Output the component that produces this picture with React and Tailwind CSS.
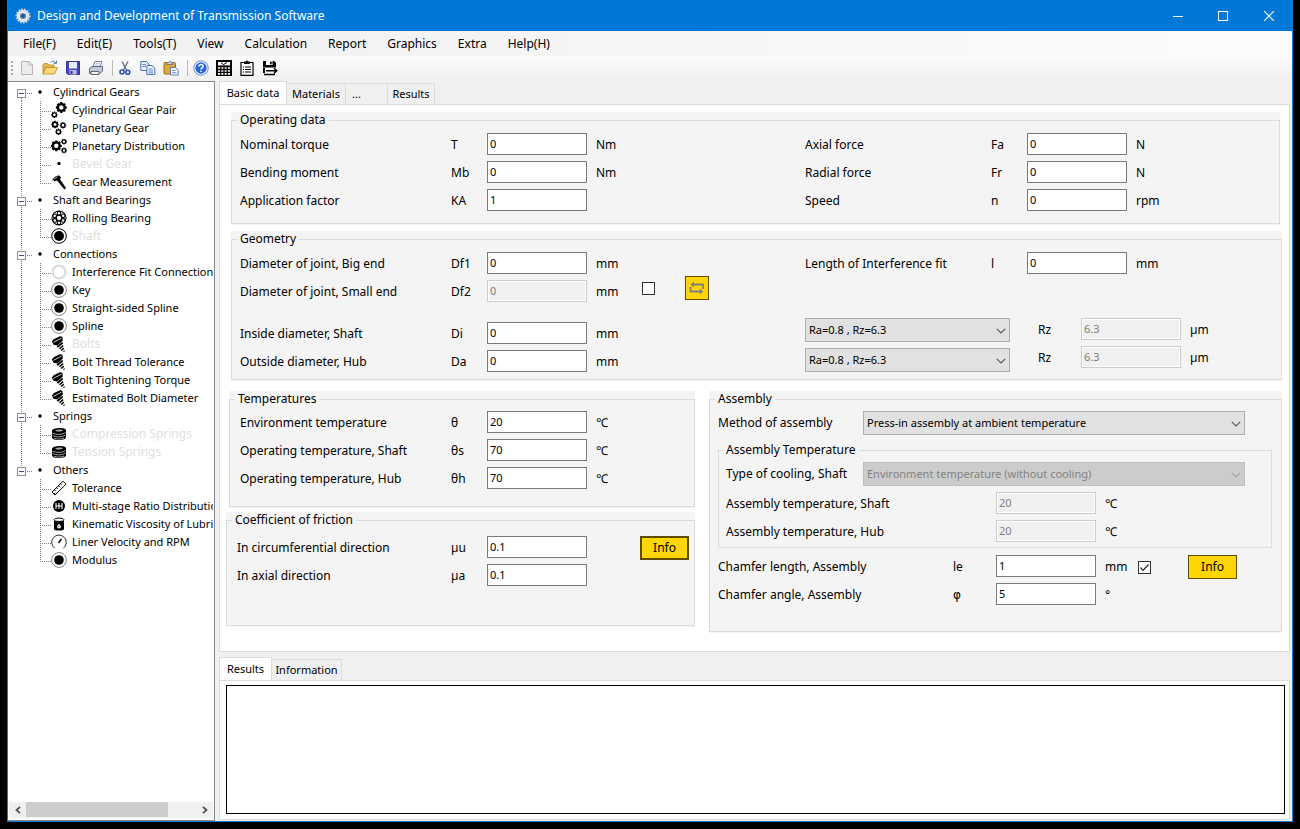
import React, { useId, useState } from "react";

const MENUS = ["File(F)", "Edit(E)", "Tools(T)", "View", "Calculation", "Report", "Graphics", "Extra", "Help(H)"];

const TREE = [
  {
    label: "Cylindrical Gears",
    items: [
      { label: "Cylindrical Gear Pair", icon: "gearPair" },
      { label: "Planetary Gear", icon: "planetary" },
      { label: "Planetary Distribution", icon: "distribution" },
      { label: "Bevel Gear", icon: "dot", off: true },
      { label: "Gear Measurement", icon: "caliper" },
    ],
  },
  {
    label: "Shaft and Bearings",
    items: [
      { label: "Rolling Bearing", icon: "bearing" },
      { label: "Shaft", icon: "shaft", off: true },
    ],
  },
  {
    label: "Connections",
    items: [
      { label: "Interference Fit Connection", icon: "ring" },
      { label: "Key", icon: "disc" },
      { label: "Straight-sided Spline", icon: "disc" },
      { label: "Spline", icon: "disc" },
      { label: "Bolts", icon: "bolt", off: true },
      { label: "Bolt Thread Tolerance", icon: "bolt" },
      { label: "Bolt Tightening Torque", icon: "bolt" },
      { label: "Estimated Bolt Diameter", icon: "bolt" },
    ],
  },
  {
    label: "Springs",
    items: [
      { label: "Compression Springs", icon: "spring", off: true },
      { label: "Tension Springs", icon: "spring", off: true },
    ],
  },
  {
    label: "Others",
    items: [
      { label: "Tolerance", icon: "ruler" },
      { label: "Multi-stage Ratio Distribution", icon: "ratio" },
      { label: "Kinematic Viscosity of Lubricant", icon: "oil" },
      { label: "Liner Velocity and RPM", icon: "gauge" },
      { label: "Modulus", icon: "disc" },
    ],
  },
];

// Ring with eight short teeth
const Gear = ({ x, y, r }) => (
  <g transform={`translate(${x} ${y})`} stroke="#000" fill="none">
    <circle r={r * 0.62} strokeWidth={r * 0.42} />
    {[0, 45, 90, 135].map((a) => (
      <g key={a} transform={`rotate(${a})`} strokeWidth={r * 0.42}>
        <path d={`M0 ${-r}V${-r * 0.7}M0 ${r * 0.7}V${r}`} />
      </g>
    ))}
  </g>
);

const treeIcons = {
  gearPair: (
    <>
      <Gear x={10.3} y={5.5} r={5.4} />
      <Gear x={3.4} y={12.8} r={3.2} />
    </>
  ),
  planetary: (
    <>
      <Gear x={4} y={4.5} r={3.7} />
      <Gear x={12} y={5.3} r={3.2} />
      <Gear x={7.5} y={11.8} r={3.2} />
    </>
  ),
  distribution: (
    <>
      <Gear x={5.3} y={7.8} r={5.4} />
      <Gear x={13} y={3.6} r={2.9} />
      <Gear x={13} y={12.4} r={2.9} />
    </>
  ),
  dot: <rect x="6.5" y="6" width="3" height="3" rx="1" />,
  caliper: (
    <>
      <path d="M.8 6.6 L3.6 3 L8 1.2 L10 3.4 L9 5.2 L15 14 L13.4 15.6 L6 6.6 L3.4 7.6 L2.6 6 Z" />
      <path d="M3 5 L6.4 3" stroke="#fff" strokeWidth=".7" />
    </>
  ),
  bearing: (
    <g fill="none" stroke="#000" strokeWidth="1.1">
      <circle cx="8" cy="8" r="7" />
      <circle cx="8" cy="8" r="2.7" />
      <circle cx="8" cy="3.2" r="1.8" />
      <circle cx="12.3" cy="5.8" r="1.8" />
      <circle cx="12.2" cy="10.4" r="1.8" />
      <circle cx="8" cy="12.8" r="1.8" />
      <circle cx="3.8" cy="10.4" r="1.8" />
      <circle cx="3.7" cy="5.8" r="1.8" />
    </g>
  ),
  shaft: (
    <>
      <circle cx="8" cy="8" r="7.3" fill="#fff" stroke="#000" />
      <circle cx="8" cy="8" r="5" />
    </>
  ),
  ring: <circle cx="8" cy="8" r="6.4" fill="none" stroke="#dcdcdc" strokeWidth="2.4" />,
  disc: (
    <>
      <circle cx="8" cy="8" r="7.4" fill="#fff" stroke="#777" strokeWidth=".9" />
      <circle cx="8" cy="8" r="4.8" />
    </>
  ),
  bolt: (
    <>
      <path d="M.8 5.4 L3 3 L9 .3 L11.4 .8 L11.8 4.6 L6.4 9.4 L2.6 8.8 Z" />
      <path d="M5.6 10.4 L11.4 5.8 L12 7.6 L7 11.8 Z" />
      <path d="M8 12.2 L12 8.8 L12.4 10.6 L9 13.2 Z" />
      <path d="M9.6 14 L12.6 11.6 L13 13 L10.8 15 Z" />
      <path d="M11.8 15.6 L13.6 14 L13.6 15.8 Z" />
      <path d="M2.4 6.4 L10.4 2.2" stroke="#fff" strokeWidth=".8" />
    </>
  ),
  spring: (
    <>
      <path d="M1 5 C1 1.5 15 1 15 4.5 V11 C15 15 1 15 1 11.5 Z" />
      <path d="M4 4.8 C5.5 3.4 10.5 3.2 12 4.2 C11 5.6 6 6 4 4.8 Z" fill="#aaa" />
      <path
        d="M1.5 7 C5 9 11 8.8 14.5 6.6 M1.5 9.5 C5 11.4 11 11.4 14.5 9 M3 12.4 C7 13.4 10 13.2 13 12"
        stroke="#ccc"
        strokeWidth=".8"
        fill="none"
      />
    </>
  ),
  ruler: (
    <g fill="#fff" stroke="#000" strokeWidth="1">
      <path d="M1 12 L12 1.2 L15 4.2 L4 15 Z" />
      <path d="M3.5 9.8 L5 11.3 M5.5 7.8 L6.6 8.9 M7.5 5.8 L9 7.3 M9.5 3.8 L10.6 4.9 M2.8 14 L4.2 13" />
    </g>
  ),
  ratio: (
    <>
      <circle cx="8" cy="8" r="6" />
      <path d="M5 5V11M8 5V11M11 5V11M5 8H11" stroke="#fff" strokeWidth="1.1" />
    </>
  ),
  oil: (
    <>
      <path d="M3 5 H13 V13 C13 15 3 15 3 13 Z" />
      <ellipse cx="8" cy="3.8" rx="5" ry="1.7" fill="#fff" stroke="#000" />
      <path d="M8 7.5 L10 10.5 A2 2 0 1 1 6 10.5 Z" fill="#fff" />
      <path d="M7.2 10.8 L8.6 10" stroke="#000" strokeWidth=".8" />
    </>
  ),
  gauge: (
    <g fill="none" stroke="#333" strokeWidth="1">
      <path d="M3.6 14.2 A7.3 7.3 0 1 1 12.4 14.2" />
      <path d="M7.5 9 L10.3 4.8" stroke="#000" strokeWidth="1.4" />
    </g>
  ),
};

// Dotted connector lines to the left of a tree label
const Branch = ({ root, first, last, end, trunk }) => (
  <svg width={root ? 44 : 42} height="18" className="shrink-0" stroke="#808080" fill="none" shapeRendering="crispEdges">
    {root ? (
      <>
        <path d={`M12.5 ${first ? 11 : 0}V${last ? 11 : 18}`} strokeDasharray="1 1" />
        <path d="M18 10.5H24" strokeDasharray="1 1" />
        <rect x="8.5" y="6.5" width="8" height="8" fill="#fbfbfb" stroke="#919191" />
        <path d="M10 10.5H15" stroke="#3a4fa0" />
        <circle cx="31" cy="9" r="1.7" fill="#000" stroke="none" shapeRendering="auto" />
      </>
    ) : (
      <>
        {trunk && <path d="M12.5 0V18" strokeDasharray="1 1" />}
        <path d={`M31.5 0V${end ? 11 : 18}`} strokeDasharray="1 1" />
        <path d="M33 10.5H42" strokeDasharray="1 1" />
      </>
    )}
  </svg>
);

const Tree = () => (
  <ul className="min-h-0 flex-1 overflow-hidden pt-px text-[11px] leading-[18px]">
    {TREE.map((group, gi) => {
      const last = gi === TREE.length - 1;
      return (
        <li key={group.label}>
          <div className="flex h-[18px] whitespace-nowrap">
            <Branch root first={gi === 0} last={last} />
            {group.label}
          </div>
          <ul>
            {group.items.map((item, i) => (
              <li key={item.label} className="flex h-[18px] items-center whitespace-nowrap">
                <Branch trunk={!last} end={i === group.items.length - 1} />
                <svg width="16" height="16" viewBox="0 0 16 16" className="mr-[5px] shrink-0">
                  {treeIcons[item.icon]}
                </svg>
                <span className={item.off ? "text-[12px] text-[#e0e0e0]" : ""}>{item.label}</span>
              </li>
            ))}
          </ul>
        </li>
      );
    })}
  </ul>
);

const ScrollBar = () => (
  <div className="flex h-4 items-stretch bg-[#f0f0f0]">
    <button type="button" aria-label="Scroll left" className="flex w-[17px] items-center justify-center">
      <svg width="8" height="8" fill="none" stroke="#505050" strokeWidth="1.8">
        <path d="M6 .8 L2.5 4 L6 7.2" />
      </svg>
    </button>
    <div className="flex-1">
      <div className="h-[15px] w-5/6 bg-[#cdcdcd]" />
    </div>
    <button type="button" aria-label="Scroll right" className="flex w-[17px] items-center justify-center">
      <svg width="8" height="8" fill="none" stroke="#505050" strokeWidth="1.8">
        <path d="M2 .8 L5.5 4 L2 7.2" />
      </svg>
    </button>
  </div>
);

const toolIcons = {
  New: <path d="M2.5 1.5H10L13.5 5V14.5H2.5Z M10 1.5V5H13.5" fill="#ececec" stroke="#b5b5b5" />,
  Open: (
    <>
      <path d="M1 14V4.5L2 3.5H5.5L7 5H12V7.5H4Z" fill="#e8b647" stroke="#b98a26" strokeWidth=".8" />
      <path d="M1 14L4 7.5H15.5L12.5 14Z" fill="#fbd977" stroke="#b98a26" strokeWidth=".8" />
      <path d="M8.5 2.5C10 .5 12.5 .8 13.6 3 M11.5 3.3H14.5V.8" fill="none" stroke="#4a6fa5" />
    </>
  ),
  Save: (
    <>
      <path d="M1.5 1.5H14.5V14.5H3L1.5 13Z" fill="#4747c2" stroke="#32329a" />
      <rect x="4" y="2" width="8" height="6.5" fill="#e6ecfb" />
      <rect x="4.5" y="10" width="7" height="4.5" fill="#b7c0e8" />
      <rect x="5.5" y="11" width="2" height="3" fill="#32329a" />
    </>
  ),
  Print: (
    <>
      <path d="M5 7L7 1.5H14L12 7Z" fill="#fff" stroke="#71809a" />
      <path d="M1.5 8.5L4 6.5H14.5V11L12 13.5H1.5Z" fill="#c6ccd6" stroke="#5a6578" />
      <path d="M3 11.5H11V14.5H3Z" fill="#f2f4f8" stroke="#5a6578" />
      <path d="M7.5 3.5H12 M7 5H11.5" stroke="#9aa7bb" strokeWidth=".7" />
    </>
  ),
  Cut: (
    <g fill="none">
      <path d="M5 1.5L9.5 10 M11 1.5L6.5 10" stroke="#5d7390" strokeWidth="1.4" />
      <circle cx="5" cy="12" r="2" stroke="#2f52b8" strokeWidth="1.6" />
      <circle cx="10.8" cy="12.2" r="2" stroke="#2f52b8" strokeWidth="1.6" />
    </g>
  ),
  Copy: (
    <g fill="#eaf1ff" stroke="#4a72b8">
      <path d="M.8 1.5H6.5L9 4V10.5H.8Z" />
      <path d="M6.8 5.5H12L14.8 8.2V14.5H6.8Z" />
      <path d="M2.3 4.5H6M2.3 6.5H6M8.5 9H12.5M8.5 11H13M8.5 12.8H13" strokeWidth=".8" />
    </g>
  ),
  Paste: (
    <>
      <rect x="1" y="2.5" width="11.5" height="11.5" rx="1" fill="#e0a63c" stroke="#9b6b18" />
      <path d="M4 4.5V2.5H5.5L6.8 1L8 2.5H9.5V4.5Z" fill="#c9ced8" stroke="#626b7a" strokeWidth=".8" />
      <path d="M7.5 7.5H12.5L15.2 10V15H7.5Z" fill="#f0f5ff" stroke="#5877ac" strokeWidth=".9" />
      <path d="M9 10.5H12.5M9 12.7H13.5" stroke="#5877ac" strokeWidth=".8" />
    </>
  ),
  Help: (
    <>
      <circle cx="8" cy="8" r="7.2" fill="#fff" stroke="#4f79c9" strokeWidth=".9" />
      <circle cx="8" cy="8" r="5.7" fill="#2a66d9" />
      <path d="M5.9 6.6C5.9 3.8 10.3 4 10.1 6.4C10 7.9 8 7.8 8 9.5 M8 10.8V12" fill="none" stroke="#fff" strokeWidth="1.5" />
    </>
  ),
  Calculator: (
    <>
      <rect width="16" height="16" />
      <rect x="2" y="2" width="12" height="3.4" fill="#fff" />
      <path d="M5 2.8L7.4 4.6L11 2.5" fill="none" stroke="#000" />
      <path d="M2 8H14M2 11H14M2 13.8H14" stroke="#fff" strokeWidth="1.7" strokeDasharray="2.1 1.2" />
    </>
  ),
  Clipboard: (
    <>
      <path d="M2 2.5H14V15.3H2Z" fill="#fff" stroke="#000" strokeWidth="1.2" />
      <path d="M5 1.5H7L8 .3L9 1.5H11V4H5Z" />
      <path d="M6 7H12M6 9.5H12M6 12H12" stroke="#000" strokeWidth="1.1" />
      <path d="M3.8 7H5M3.8 9.5H5M3.8 12H5" stroke="#000" strokeWidth="1.1" />
    </>
  ),
  "Save as": (
    <>
      <path d="M1 1H12L14 3V7.5H1Z M1 7V13H3V7Z" />
      <rect x="4" y="1" width="6.5" height="4" fill="#fff" />
      <rect x="8" y="1.6" width="1.6" height="2.8" />
      <path d="M3 8.3H12V13H3Z" fill="#fff" />
      <path d="M4 10.8H14.5M12 8.3L14.8 10.8L12 13.3M2 14.5H13" fill="none" stroke="#000" strokeWidth="1.5" />
    </>
  ),
};

const ToolButton = ({ name }) => (
  <button type="button" aria-label={name} className="flex size-[23px] items-center justify-center">
    <svg width="16" height="16" viewBox="0 0 16 16">
      {toolIcons[name]}
    </svg>
  </button>
);

const ToolBar = () => (
  <div className="flex h-[25px] items-center bg-linear-to-b from-[#fcfcfc] to-[#f0f0f0] pb-[2px] pl-[3px]">
    <svg width="4" height="16">
      <path d="M1 1V16" stroke="#a8a8a8" strokeWidth="2" strokeDasharray="2 2" />
    </svg>
    {["New", "Open", "Save", "Print"].map((n) => (
      <ToolButton key={n} name={n} />
    ))}
    <span className="ml-[5px] h-4 w-px bg-[#bdbdbd]" />
    {["Cut", "Copy", "Paste"].map((n) => (
      <ToolButton key={n} name={n} />
    ))}
    <span className="mr-px ml-[5px] h-4 w-px bg-[#bdbdbd]" />
    {["Help", "Calculator", "Clipboard", "Save as"].map((n) => (
      <ToolButton key={n} name={n} />
    ))}
  </div>
);

const TitleBar = () => (
  <header className="flex h-[31px] items-center bg-[#0078d7] pl-[7px] text-white">
    <svg width="16" height="16" viewBox="0 0 16 16">
      <circle cx="8" cy="8" r="6.6" fill="none" stroke="#c3ccd6" strokeWidth="2" strokeDasharray="1.7 1.2" />
      <circle cx="8" cy="8" r="4.5" fill="none" stroke="#dfe5ea" strokeWidth="3.4" />
      <circle cx="8" cy="8" r="2.6" fill="#1d5f9c" stroke="#8b98a6" strokeWidth=".8" />
    </svg>
    <h1 className="ml-[6px] flex-1 text-[12px]">Design and Development of Transmission Software</h1>
    <button type="button" aria-label="Minimize" className="flex h-full w-[45px] items-center justify-center">
      <svg width="10" height="10" stroke="#fff">
        <path d="M0 5.5H10" />
      </svg>
    </button>
    <button type="button" aria-label="Maximize" className="flex h-full w-[45px] items-center justify-center">
      <svg width="10" height="10" stroke="#fff" fill="none">
        <rect x=".5" y=".5" width="9" height="9" />
      </svg>
    </button>
    <button type="button" aria-label="Close" className="flex h-full w-[47px] items-center justify-center">
      <svg width="10" height="10" stroke="#fff" strokeWidth="1.2">
        <path d="M0 0L10 10M10 0L0 10" />
      </svg>
    </button>
  </header>
);

const Group = ({ title, className = "", legendClass = "-ml-[3px]", children }) => (
  <div className="bg-[#f4f4f4] pb-px">
    <fieldset className={`min-w-0 border border-[#dcdcdc] ${className}`}>
      <legend className={`px-[3px] leading-4 ${legendClass}`}>{title}</legend>
      {children}
    </fieldset>
  </div>
);

const TextInput = ({ disabled, ...props }) => (
  <input
    type="text"
    disabled={disabled}
    className="h-[22px] w-[100px] shrink-0 border border-[#7a7a7a] bg-white px-[2px] pb-[2px] text-[11px] outline-none disabled:border-[#cccccc] disabled:bg-[#f0f0f0] disabled:text-[#808080] disabled:shadow-[inset_0_0_0_1px_#fff]"
    {...props}
  />
);

const Field = ({ label, symbol, value, unit, disabled, symbolClass = "w-9", unitClass = "w-11", className = "" }) => {
  const id = useId();
  return (
    <div className={`flex h-7 items-center ${className}`}>
      <label htmlFor={id} className="flex-1 pt-[2px] whitespace-nowrap">
        {label}
      </label>
      <span className={`pt-[2px] ${symbolClass}`}>{symbol}</span>
      <TextInput id={id} defaultValue={value} disabled={disabled} />
      <span className={`ml-[9px] pt-[2px] ${unitClass}`}>{unit}</span>
    </div>
  );
};

const Select = ({ options, className = "", disabled, ...props }) => (
  <div className={`relative ${className}`}>
    <select
      disabled={disabled}
      className="block h-6 w-full appearance-none border border-[#adadad] bg-[#e1e1e1] pl-[3px] text-[11px] text-black opacity-100 disabled:border-[#bfbfbf] disabled:bg-[#cccccc] disabled:text-[#838383]"
      {...props}
    >
      {options.map((o) => (
        <option key={o}>{o}</option>
      ))}
    </select>
    <svg
      width="10"
      height="6"
      className="pointer-events-none absolute top-[10px] right-[4px]"
      fill="none"
      stroke={disabled ? "#a5a5a5" : "#555"}
      strokeWidth="1.1"
    >
      <path d="M.8 .8L5 5L9.2 .8" />
    </svg>
  </div>
);

const CheckBox = ({ label, defaultChecked = false }) => {
  const [checked, setChecked] = useState(defaultChecked);
  return (
    <span className="relative flex size-[13px]">
      <input
        type="checkbox"
        aria-label={label}
        checked={checked}
        onChange={(e) => setChecked(e.target.checked)}
        className="size-[13px] appearance-none border border-[#333] bg-white"
      />
      {checked && (
        <svg width="13" height="13" className="pointer-events-none absolute inset-0" fill="none" stroke="#222" strokeWidth="1.2">
          <path d="M2.5 6.5L5 9.3L10.5 3.5" />
        </svg>
      )}
    </span>
  );
};

const InfoButton = ({ className }) => (
  <button type="button" className={`h-6 w-[49px] bg-[#ffd700] text-[12px] leading-none ${className}`}>
    Info
  </button>
);

const Tabs = ({ items }) => (
  <div role="tablist" className="flex items-end text-[11px] leading-4">
    {items.map(([name, width], i) =>
      i === 0 ? (
        <button
          key={name}
          type="button"
          role="tab"
          aria-selected="true"
          className={`-mb-px h-6 border border-b-0 border-[#dcdcdc] bg-white pb-[2px] ${width}`}
        >
          {name}
        </button>
      ) : (
        <button
          key={name}
          type="button"
          role="tab"
          aria-selected="false"
          className={`h-[21px] border border-b-0 border-l-0 border-[#dcdcdc] ${width}`}
        >
          {name}
        </button>
      )
    )}
  </div>
);

const OperatingData = () => (
  <Group title="Operating data" className="px-2 pb-[9px]">
    <div className="grid grid-cols-[565px_1fr] pt-[2px]">
      <div className="w-[400px]">
        <Field label="Nominal torque" symbol="T" value="0" unit="Nm" />
        <Field label="Bending moment" symbol="Mb" value="0" unit="Nm" />
        <Field label="Application factor" symbol="KA" value="1" />
      </div>
      <div className="w-[375px]">
        <Field label="Axial force" symbol="Fa" value="0" unit="N" />
        <Field label="Radial force" symbol="Fr" value="0" unit="N" />
        <Field label="Speed" symbol="n" value="0" unit="rpm" />
      </div>
    </div>
  </Group>
);

const ROUGHNESS = ["Ra=0.8 , Rz=6.3", "Ra=1.6 , Rz=10"];

const Geometry = () => (
  <Group title="Geometry" className="px-2 pb-1">
    <div className="grid grid-cols-[565px_1fr] pt-[2px]">
      <div>
        <Field label="Diameter of joint, Big end" symbol="Df1" value="0" unit="mm" className="w-[400px]" />
        <div className="flex h-7 items-center">
          <Field label="Diameter of joint, Small end" symbol="Df2" value="0" unit="mm" disabled className="w-[400px]" />
          <div className="ml-[2px] flex items-center gap-[30px] pb-[6px]">
            <CheckBox label="Small end" />
            <button
              type="button"
              aria-label="Swap"
              className="flex size-6 items-center justify-center border border-[#5c4d00] bg-[#ffd700]"
            >
              <svg width="16" height="14" viewBox="0 0 16 14" fill="none" stroke="#808080" strokeWidth="1.8">
                <path d="M3 3.5H14V8M1.5 6V10.5H12.5" />
                <path d="M5 .5L1.5 3.5L5 6.5Z M10.8 7.5L14.2 10.5L10.8 13.5Z" fill="#808080" stroke="none" />
              </svg>
            </button>
          </div>
        </div>
        <div className="mt-[14px] w-[400px]">
          <Field label="Inside diameter, Shaft" symbol="Di" value="0" unit="mm" />
          <Field label="Outside diameter, Hub" symbol="Da" value="0" unit="mm" />
        </div>
      </div>
      <div>
        <Field label="Length of Interference fit" symbol="l" value="0" unit="mm" className="w-[375px]" />
        <div className="mt-[38px] flex">
          <div className="mr-7 flex w-[205px] flex-col gap-[6px] pt-[3px]">
            <Select aria-label="Roughness, Shaft" options={ROUGHNESS} />
            <Select aria-label="Roughness, Hub" options={ROUGHNESS} />
          </div>
          <div className="w-[196px]">
            <Field label="Rz" symbol="" value="6.3" unit="µm" disabled symbolClass="" unitClass="w-11" />
            <Field label="Rz" symbol="" value="6.3" unit="µm" disabled symbolClass="" unitClass="w-11" />
          </div>
        </div>
      </div>
    </div>
  </Group>
);

const Temperatures = () => (
  <Group title="Temperatures" className="px-[10px] pb-[14px]" legendClass="-ml-[5px]">
    <div className="w-[400px] pt-px">
      <Field label="Environment temperature" symbol="θ" value="20" unit="℃" />
      <Field label="Operating temperature, Shaft" symbol="θs" value="70" unit="℃" />
      <Field label="Operating temperature, Hub" symbol="θh" value="70" unit="℃" />
    </div>
  </Group>
);

const Friction = () => (
  <Group title="Coefficient of friction" className="px-[10px] pb-9" legendClass="-ml-[5px]">
    <div className="flex justify-between pt-[5px]">
      <div className="w-[403px]">
        <Field label="In circumferential direction" symbol="µu" value="0.1" />
        <Field label="In axial direction" symbol="µa" value="0.1" />
      </div>
      <InfoButton className="-mr-[5px] mt-[3px] border-2 border-[#5c4d00]" />
    </div>
  </Group>
);

const Assembly = () => (
  <Group title="Assembly" className="pr-[9px] pb-[23px] pl-2">
    <div className="flex h-7 items-center pt-1">
      <label htmlFor="method" className="w-[145px]">
        Method of assembly
      </label>
      <Select id="method" className="mr-[27px] flex-1" options={["Press-in assembly at ambient temperature"]} />
    </div>
    <div className="mt-[7px]">
      <Group title="Assembly Temperature" className="px-[7px] pt-[2px] pb-[2px]">
        <div className="flex h-7 items-center">
          <label htmlFor="cooling" className="w-[137px] whitespace-nowrap">
            Type of cooling, Shaft
          </label>
          <Select
            id="cooling"
            disabled
            className="mr-[19px] flex-1"
            options={["Environment temperature (without cooling)"]}
          />
        </div>
        <div className="w-[423px] pt-px">
          <Field label="Assembly temperature, Shaft" symbol="" value="20" unit="℃" disabled />
          <Field label="Assembly temperature, Hub" symbol="" value="20" unit="℃" disabled />
        </div>
      </Group>
    </div>
    <div className="flex pt-[3px]">
      <div className="w-[420px]">
        <Field label="Chamfer length, Assembly" symbol="le" value="1" unit="mm" symbolClass="w-[43px]" unitClass="w-[33px]" />
        <Field
          label="Chamfer angle, Assembly"
          symbol="φ"
          value="5"
          unit="°"
          symbolClass="w-[43px] font-['DejaVu_Sans',sans-serif]"
          unitClass="w-[33px]"
        />
      </div>
      <div className="flex h-7 items-center gap-[37px] pt-[2px]">
        <CheckBox label="Chamfer length" defaultChecked />
        <InfoButton className="border border-[#5c4d00]" />
      </div>
    </div>
  </Group>
);

const App = () => {
  return (
    <div className="flex min-h-screen bg-black px-[7px] pb-[7px] font-['Noto_Sans','Noto_Sans_CJK_SC',sans-serif] text-black">
      <div className="flex min-w-0 flex-1 flex-col border border-t-0 border-[#1979ca] bg-[#f0f0f0]">
        <TitleBar />
        <nav className="flex h-[25px] items-center gap-[21px] bg-linear-to-r from-[#f0f0f0] to-[#fcfcfc] pl-[15px] text-[12px]">
          {MENUS.map((m) => (
            <button key={m} type="button">
              {m}
            </button>
          ))}
        </nav>
        <ToolBar />
        <div className="flex flex-1">
          <aside className="flex w-[207px] flex-col border border-l-0 border-[#828790] bg-white px-px pb-[2px]">
            <Tree />
            <ScrollBar />
          </aside>
          <main className="flex min-w-0 flex-1 flex-col pr-[2px] pb-px pl-1">
            <Tabs
              items={[
                ["Basic data", "w-[68px]"],
                ["Materials", "w-[59px]"],
                ["...", "w-[42px] pr-5"],
                ["Results", "w-[47px]"],
              ]}
            />
            <section className="border border-[#dcdcdc] bg-white pt-[7px] pb-[18px] text-[12px]">
              <div className="mr-[9px] ml-[11px]">
                <OperatingData />
              </div>
              <div className="mt-[6px] mr-[7px] ml-[11px]">
                <Geometry />
              </div>
              <div className="mt-[10px] mr-[7px] ml-[6px] grid grid-cols-[469fr_573fr] items-start gap-[14px]">
                <div className="min-w-0">
                  <div className="ml-[3px]">
                    <Temperatures />
                  </div>
                  <div className="mt-1">
                    <Friction />
                  </div>
                </div>
                <Assembly />
              </div>
            </section>
            <div className="mt-[5px] flex flex-1 flex-col">
              <Tabs
                items={[
                  ["Results", "w-[53px]"],
                  ["Information", "w-[70px]"],
                ]}
              />
              <section className="flex flex-1 flex-col border border-[#dcdcdc] bg-white pt-1 pr-1 pb-[5px] pl-[6px]">
                <textarea
                  aria-label="Results output"
                  className="w-full flex-1 resize-none border border-black bg-white p-1 text-[11px] outline-none"
                />
              </section>
            </div>
          </main>
        </div>
      </div>
    </div>
  );
};

export default App;
